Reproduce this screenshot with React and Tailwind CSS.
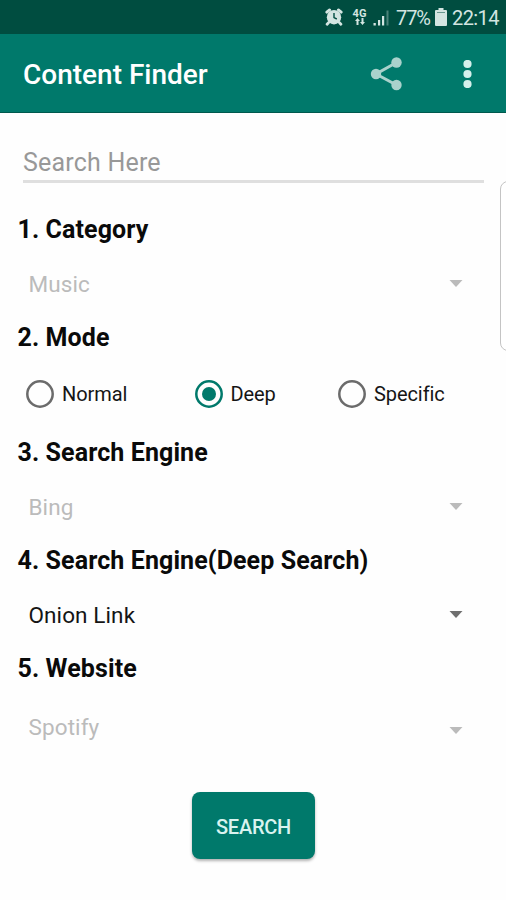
import React from "react";

function StatusBar() {
  return (
    <div className="flex h-[34px] items-center bg-[#004d40] text-[#d3e5e1]">
      <svg className="ml-[325px] h-[18px] w-[18px] shrink-0" viewBox="0 0 18 18" fill="none">
        <circle cx="9" cy="9.2" r="7.2" fill="currentColor" />
        <path d="M1.800 4.200 4.600 1.900M16.200 4.200l-2.800-2.300M3.600 14.600l-1.500 1.700M14.400 14.600l1.500 1.700" stroke="currentColor" strokeWidth="2.800" strokeLinecap="round" />
        <path d="M9 5v4.600l2.800 1.400" stroke="#004d40" strokeWidth="1.400" />
      </svg>
      <div className="ml-[9px] flex w-[15px] shrink-0 flex-col items-center">
        <span className="text-[11px] leading-[9px] font-bold">4G</span>
        <svg className="h-[7px] w-[10px]" viewBox="0 0 10 7" fill="currentColor">
          <path d="M2.500 0 5 3H3.500v4h-2V3H0zM7.500 7 5 4h1.500V0h2v4H10z" />
        </svg>
      </div>
      <svg className="ml-[6px] h-[17px] w-[17px] shrink-0" viewBox="0 0 17 17" fill="currentColor">
        <path d="M.5 14h2.300v2.500H.5zM5 11h2.200v5.500H5zM9 7h2.200v9.500H9z" />
        <path opacity=".35" d="M13.500 1.500h2v15h-2z" />
      </svg>
      <span className="ml-[6px] w-[39px] pt-[2px] text-[20px] leading-[22px] tracking-[-1.1px]">77%</span>
      <svg className="h-[18px] w-[12px] shrink-0" viewBox="0 0 12 18" fill="currentColor">
        <path d="M3.500 0h5v2H11a1 1 0 0 1 1 1v14a1 1 0 0 1-1 1H1a1 1 0 0 1-1-1V3a1 1 0 0 1 1-1h2.500z" />
        <path d="M2 4.500h8" stroke="#004d40" opacity=".5" />
      </svg>
      <span className="ml-[5px] pt-[2px] text-[20px] leading-[22px] tracking-[-0.6px]">22:14</span>
    </div>
  );
}

function AppBar() {
  return (
    <header className="flex h-[79px] items-center border-b border-[#00594e] bg-[#00796b] pt-[2px] pl-[23px]">
      <h1 className="w-[347px] pt-[2px] text-[28px] leading-8 font-medium whitespace-nowrap text-white">Content Finder</h1>
      <svg className="h-[34px] w-[32px] shrink-0" viewBox="0 0 32 34">
        <path d="M26.500 5.500 6 17l20.500 11" fill="none" stroke="#a9d2cc" strokeWidth="3" />
        <g fill="#a9d2cc">
          <circle cx="26.500" cy="5.500" r="5.200" />
          <circle cx="6" cy="17" r="5.200" />
          <circle cx="26.500" cy="28" r="5.200" />
        </g>
      </svg>
      <svg className="ml-[61px] h-[28px] w-[9px] shrink-0" viewBox="0 0 9 28" fill="#d5f0ec">
        <circle cx="4.500" cy="4" r="4.100" />
        <circle cx="4.500" cy="14" r="4.100" />
        <circle cx="4.500" cy="24" r="4.100" />
      </svg>
    </header>
  );
}

function Heading({ children }) {
  return <h2 className="h-[30px] pt-px pl-[17.500px] text-[25px] leading-[30px] font-bold tracking-[0.1px] whitespace-nowrap text-[#0a0a0a]">{children}</h2>;
}

function Select({ value, active = false, last = false }) {
  return (
    <div className={`flex justify-between pr-[43px] pl-[28.500px] ${last ? "h-[109px] pt-[29px]" : "h-[78px] pt-[25px]"}`}>
      <span className={`text-[22.500px] leading-[30px] tracking-[0.1px] ${active ? "text-[#151515]" : "text-[#bbbbbb]"}`}>{value}</span>
      <svg className={`h-[7px] w-[14px] ${last ? "mt-[15px]" : "mt-[11px]"}`} viewBox="0 0 14 7">
        <path d="M.5 0h13L7 7z" fill={active ? "#6f6f6f" : "#bbbbbb"} />
      </svg>
    </div>
  );
}

function Radio({ label, checked = false, className }) {
  return (
    <div className={`flex items-center gap-2 ${className}`}>
      <svg className="h-7 w-7 shrink-0" viewBox="0 0 28 28">
        <circle cx="14" cy="14" r="12.700" fill="none" strokeWidth="2.500" stroke={checked ? "#00796b" : "#6b6b6b"} />
        {checked && <circle cx="14" cy="14" r="7" fill="#00796b" />}
      </svg>
      <span className="text-[20px] leading-6 tracking-[-0.08px] text-[#151515]">{label}</span>
    </div>
  );
}

export default function App() {
  return (
    <div className="relative h-[900px] w-[506px] overflow-hidden bg-[#fefefe] font-[Roboto,sans-serif]">
      <StatusBar />
      <AppBar />
      <div className="mx-[23px] mb-[31px] h-[70px] w-[461px] border-b-[3px] border-[#dfdfdf] pt-[35px] text-[25px] leading-[30px] tracking-[0.2px] text-[#989898]">
        Search Here
      </div>
      <Heading>1. Category</Heading>
      <Select value="Music" />
      <Heading>2. Mode</Heading>
      <div className="flex h-[85px] items-center pb-[2px] pl-[26px]">
        <Radio label="Normal" className="w-[168.500px]" />
        <Radio label="Deep" checked className="w-[143.500px]" />
        <Radio label="Specific" />
      </div>
      <Heading>3. Search Engine</Heading>
      <Select value="Bing" />
      <Heading>4. Search Engine(Deep Search)</Heading>
      <Select value="Onion Link" active />
      <Heading>5. Website</Heading>
      <Select value="Spotify" last />
      <button className="ml-[192px] flex h-[67px] w-[123px] items-center justify-center rounded-lg bg-[#00796b] pt-[2px] text-[20px] font-medium tracking-[-0.25px] text-[#d9f3ef] shadow-[0_2px_3px_rgba(0,0,0,0.3)]">
        SEARCH
      </button>
      <div className="absolute top-[181px] right-[-14px] h-[170px] w-[20px] rounded-lg border border-[#c4c4c4] bg-white" />
    </div>
  );
}
